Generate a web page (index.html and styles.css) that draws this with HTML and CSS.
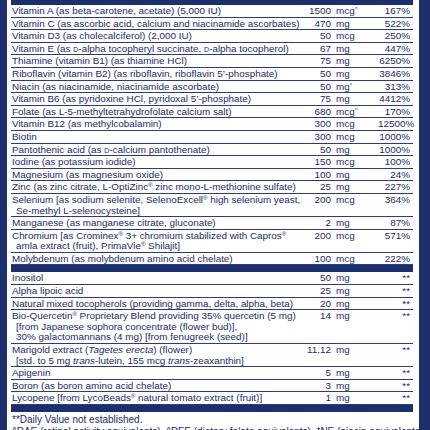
FILE: index.html
```html
<!DOCTYPE html>
<html lang="en">
<head>
    <meta charset="UTF-8">
    <meta name="viewport" content="width=device-width, initial-scale=1.0">
    <title>Supplement Facts</title>
    <link rel="stylesheet" href="styles.css">
</head>
<body>
    <div class="panel">
        <div class="facts">
            <!-- Vitamins & minerals -->
            <div class="row"><span class="name">Vitamin A (as beta-carotene, acetate) (5,000 IU)</span><span class="amt">1500</span><span class="unit">mcg<sup>^</sup></span><span class="dv">167%</span></div>
            <div class="row"><span class="name">Vitamin C (as ascorbic acid, calcium and niacinamide ascorbates)</span><span class="amt">470</span><span class="unit">mg</span><span class="dv">522%</span></div>
            <div class="row"><span class="name">Vitamin D3 (as cholecalciferol) (2,000 IU)</span><span class="amt">50</span><span class="unit">mcg</span><span class="dv">250%</span></div>
            <div class="row"><span class="name">Vitamin E (as <span class="sc">d</span>-alpha tocopheryl succinate, <span class="sc">d</span>-alpha tocopherol)</span><span class="amt">67</span><span class="unit">mg</span><span class="dv">447%</span></div>
            <div class="row"><span class="name">Thiamine (vitamin B1) (as thiamine HCl)</span><span class="amt">75</span><span class="unit">mg</span><span class="dv">6250%</span></div>
            <div class="row"><span class="name">Riboflavin (vitamin B2) (as riboflavin, riboflavin 5’-phosphate)</span><span class="amt">50</span><span class="unit">mg</span><span class="dv">3846%</span></div>
            <div class="row"><span class="name">Niacin (as niacinamide, niacinamide ascorbate)</span><span class="amt">50</span><span class="unit">mg<sup>*</sup></span><span class="dv">313%</span></div>
            <div class="row"><span class="name">Vitamin B6 (as pyridoxine HCl, pyridoxal 5’-phosphate)</span><span class="amt">75</span><span class="unit">mg</span><span class="dv">4412%</span></div>
            <div class="row"><span class="name">Folate (as L-5-methyltetrahydrofolate calcium salt)</span><span class="amt">680</span><span class="unit">mcg<sup>^</sup></span><span class="dv">170%</span></div>
            <div class="row"><span class="name">Vitamin B12 (as methylcobalamin)</span><span class="amt">300</span><span class="unit">mcg</span><span class="dv">12500%</span></div>
            <div class="row"><span class="name">Biotin</span><span class="amt">300</span><span class="unit">mcg</span><span class="dv">1000%</span></div>
            <div class="row"><span class="name">Pantothenic acid (as <span class="sc">d</span>-calcium pantothenate)</span><span class="amt">50</span><span class="unit">mg</span><span class="dv">1000%</span></div>
            <div class="row"><span class="name">Iodine (as potassium iodide)</span><span class="amt">150</span><span class="unit">mcg</span><span class="dv">100%</span></div>
            <div class="row"><span class="name">Magnesium (as magnesium oxide)</span><span class="amt">100</span><span class="unit">mg</span><span class="dv">24%</span></div>
            <div class="row"><span class="name">Zinc (as zinc citrate, L-OptiZinc<sup>®</sup> zinc mono-L-methionine sulfate)</span><span class="amt">25</span><span class="unit">mg</span><span class="dv">227%</span></div>
            <div class="row"><span class="name">Selenium [as sodium selenite, SelenoExcell<sup>®</sup> high selenium yeast,<br>Se-methyl L-selenocysteine]</span><span class="amt">200</span><span class="unit">mcg</span><span class="dv">364%</span></div>
            <div class="row"><span class="name">Manganese (as manganese citrate, gluconate)</span><span class="amt">2</span><span class="unit">mg</span><span class="dv">87%</span></div>
            <div class="row"><span class="name">Chromium [as Crominex<sup>®</sup> 3+ chromium stabilized with Capros<sup>®</sup><br>amla extract (fruit), PrimaVie<sup>®</sup> Shilajit]</span><span class="amt">200</span><span class="unit">mcg</span><span class="dv">571%</span></div>
            <div class="row"><span class="name">Molybdenum (as molybdenum amino acid chelate)</span><span class="amt">100</span><span class="unit">mcg</span><span class="dv">222%</span></div>
            <div class="bar"></div>
            <!-- Other ingredients -->
            <div class="row"><span class="name">Inositol</span><span class="amt">50</span><span class="unit">mg</span><span class="dv">**</span></div>
            <div class="row"><span class="name">Alpha lipoic acid</span><span class="amt">25</span><span class="unit">mg</span><span class="dv">**</span></div>
            <div class="row"><span class="name">Natural mixed tocopherols (providing gamma, delta, alpha, beta)</span><span class="amt">20</span><span class="unit">mg</span><span class="dv">**</span></div>
            <div class="row"><span class="name">Bio-Quercetin<sup>®</sup> Proprietary Blend providing 35% quercetin (5 mg)<br>[from Japanese sophora concentrate (flower bud)],<br>30% galactomannans (4 mg) [from fenugreek (seed)]</span><span class="amt">14</span><span class="unit">mg</span><span class="dv">**</span></div>
            <div class="row"><span class="name">Marigold extract (<i>Tagetes erecta</i>) (flower)<br>[std. to 5 mg <i>trans</i>-lutein, 155 mcg <i>trans</i>-zeaxanthin]</span><span class="amt">11.12</span><span class="unit">mg</span><span class="dv">**</span></div>
            <div class="row"><span class="name">Apigenin</span><span class="amt">5</span><span class="unit">mg</span><span class="dv">**</span></div>
            <div class="row"><span class="name">Boron (as boron amino acid chelate)</span><span class="amt">3</span><span class="unit">mg</span><span class="dv">**</span></div>
            <div class="row"><span class="name">Lycopene [from LycoBeads<sup>®</sup> natural tomato extract (fruit)]</span><span class="amt">1</span><span class="unit">mg</span><span class="dv">**</span></div>
            <div class="bar"></div>
        </div>
        <p class="note">**Daily Value not established.</p>
        <p class="note">^RAE (retinol activity equivalents). ^DFE (dietary folate equivalents). *NE (niacin equivalents).</p>
    </div>
</body>
</html>
```

FILE: styles.css
```css
html, body {
    height: 100%;
    overflow: hidden;
}

body {
    margin: 0;
    background: #1c2e6c;
    font-family: "Liberation Sans", Arial, sans-serif;
    color: #1a2b68;
}

.panel {
    margin-left: 7px;
    width: 402px;
    min-height: 100%;
    padding: 0 6px 0 4px;
    background: #fff;
}

.facts {
    border-top: 5px solid #1c2e6c;
    font-size: 9.9px;
}

.row {
    display: grid;
    grid-template-columns: 1fr 30px 47px 35px;
    padding-top: 1px;
    line-height: 10.6px;
    border-bottom: 1px solid #2a3c7c;
    white-space: nowrap;
}

.name {
    padding-left: 5px;
    text-indent: -4px;
}

.amt {
    text-align: right;
}

.unit {
    padding-left: 5px;
}

.dv {
    text-align: right;
    padding-right: 3px;
}

.sc {
    font-variant: small-caps;
}

sup {
    font-size: 6px;
    line-height: 0;
    vertical-align: 3px;
}

.bar {
    height: 7px;
    background: #1c2e6c;
}

.note {
    margin: 0;
    padding-left: 1px;
    font-size: 10px;
    line-height: 12px;
    white-space: nowrap;
}

.note:first-of-type {
    padding-top: 2px;
}
```
